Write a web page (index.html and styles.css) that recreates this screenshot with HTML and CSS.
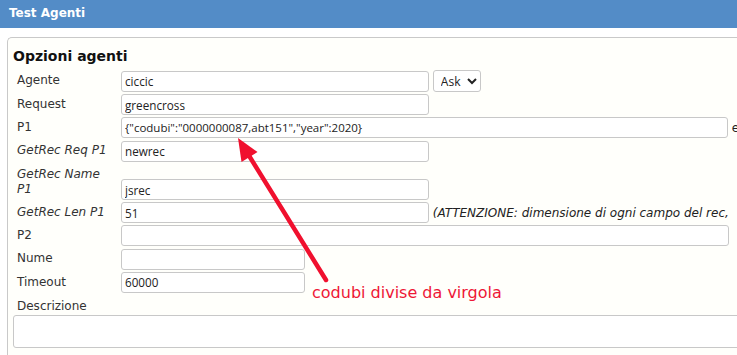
FILE: index.html
```html
<!DOCTYPE html>
<html lang="it">
<head>
<meta charset="utf-8">
<title>Test Agenti</title>
<link rel="stylesheet" href="styles.css">
</head>
<body>
<div class="topbar">Test Agenti</div>
<div class="panel">
  <h3 class="panel-title">Opzioni agenti</h3>
  <table class="form">
    <colgroup><col class="c-lbl"><col class="c-fld"></colgroup>
    <tr>
      <td class="lbl">Agente</td>
      <td class="fld"><input class="inp w-md" type="text" value="ciccic"> <select class="sel"><option>Ask</option></select></td>
    </tr>
    <tr>
      <td class="lbl">Request</td>
      <td class="fld"><input class="inp w-md" type="text" value="greencross"></td>
    </tr>
    <tr>
      <td class="lbl">P1</td>
      <td class="fld"><input class="inp w-lg p1" type="text" value='{"codubi":"0000000087,abt151","year":2020}'> <span class="note">es.</span></td>
    </tr>
    <tr>
      <td class="lbl it">GetRec Req P1</td>
      <td class="fld"><input class="inp w-md" type="text" value="newrec"></td>
    </tr>
    <tr>
      <td class="lbl it">GetRec Name P1</td>
      <td class="fld"><input class="inp w-md" type="text" value="jsrec"></td>
    </tr>
    <tr>
      <td class="lbl it">GetRec Len P1</td>
      <td class="fld"><input class="inp w-md" type="text" value="51"> <span class="note it">(ATTENZIONE: dimensione di ogni campo del rec,</span></td>
    </tr>
    <tr>
      <td class="lbl">P2</td>
      <td class="fld"><input class="inp w-lg2" type="text" value=""></td>
    </tr>
    <tr>
      <td class="lbl">Nume</td>
      <td class="fld"><input class="inp w-sm" type="text" value=""></td>
    </tr>
    <tr>
      <td class="lbl">Timeout</td>
      <td class="fld"><input class="inp w-sm" type="text" value="60000"></td>
    </tr>
    <tr>
      <td class="lbl lbl-desc" colspan="2">Descrizione</td>
    </tr>
  </table>
  <textarea class="desc"></textarea>
</div>

<svg class="annot-arrow" width="737" height="355" viewBox="0 0 737 355">
  <line x1="326" y1="280" x2="248" y2="154" stroke="#f0102e" stroke-width="4.5" stroke-linecap="round"/>
  <polygon points="238,138 257.5,152 241.5,162" fill="#f0102e"/>
</svg>
<div class="annot-text">codubi divise da virgola</div>
</body>
</html>
```
FILE: styles.css
```css
html, body {
  margin: 0;
  padding: 0;
  background: #ffffff;
  overflow: hidden;
  width: 737px;
  height: 355px;
}

body {
  font-family: "DejaVu Sans", Verdana, sans-serif;
  font-size: 12px;
  color: #222222;
  position: relative;
}

.topbar {
  height: 28px;
  line-height: 26px;
  background: #538cc7;
  color: #ffffff;
  font-weight: bold;
  font-size: 12px;
  padding-left: 9px;
}

.panel {
  margin: 9px 0 0 7px;
  width: 760px;
  border: 1px solid #c9c9c9;
  border-right: none;
  border-bottom: none;
  border-top-left-radius: 5px;
  background: #fffffb;
  padding: 10px 0 0 5px;
  height: 330px;
  box-sizing: border-box;
  overflow: hidden;
}

.panel-title {
  margin: 0 0 4px 0;
  font-size: 14px;
  line-height: 17px;
  font-weight: bold;
  color: #111111;
}

.form {
  border-collapse: separate;
  border-spacing: 0;
  table-layout: fixed;
  width: 900px;
}

.c-lbl { width: 108px; }
.c-fld { width: 792px; }

.lbl {
  padding: 4px 4px;
  line-height: 15.2px;
  vertical-align: middle;
  color: #333333;
}

.lbl-desc {
  padding-top: 5px;
  padding-bottom: 1px;
}

.it {
  font-style: italic;
}

.fld {
  padding: 1px 0;
  vertical-align: bottom;
  white-space: nowrap;
  overflow: hidden;
}

.inp {
  box-sizing: border-box;
  height: 21px;
  border: 1px solid #c8c8c8;
  border-radius: 3px;
  background: #ffffff;
  padding: 0 3px;
  margin: 0;
  font-family: "Open Sans", "Noto Sans", sans-serif;
  font-size: 11.7px;
  color: #222222;
  vertical-align: middle;
}

.p1 {
  font-size: 11.5px;
}

.w-md { width: 308px; }
.w-lg { width: 607px; }
.w-lg2 { width: 608px; }
.w-sm { width: 184px; }

.sel {
  box-sizing: border-box;
  height: 22px;
  width: 48px;
  border: 1px solid #c8c8c8;
  border-radius: 3px;
  background: #ffffff;
  font-family: "Open Sans", "Noto Sans", sans-serif;
  font-size: 12px;
  color: #222222;
  padding: 0 0 0 3px;
  margin: 0;
  vertical-align: middle;
}

.note {
  color: #222222;
  vertical-align: middle;
}

.desc {
  display: block;
  box-sizing: border-box;
  margin: 0;
  width: 740px;
  height: 33px;
  border: 1px solid #c8c8c8;
  border-radius: 3px;
  background: #ffffff;
  resize: none;
}

.annot-arrow {
  position: absolute;
  left: 0;
  top: 0;
  pointer-events: none;
}

.annot-text {
  position: absolute;
  left: 312px;
  top: 283px;
  font-family: "DejaVu Sans", sans-serif;
  font-size: 16px;
  line-height: 20px;
  color: #ee1736;
  white-space: nowrap;
}
```
